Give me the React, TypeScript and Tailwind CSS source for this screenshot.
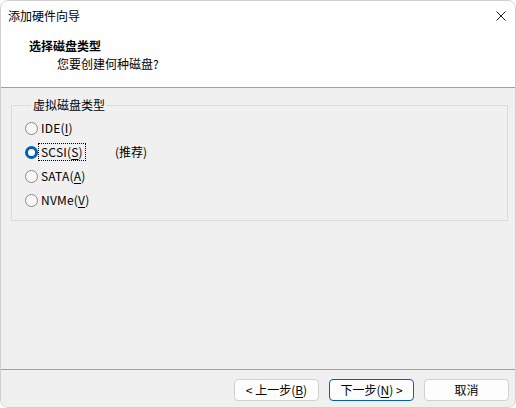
import React, { useState } from 'react';

const font = { fontFamily: '"Noto Sans CJK SC", "Noto Sans", sans-serif' };

const options = [
  { id: 'ide', name: 'IDE(', key: 'I', tail: ')' },
  { id: 'scsi', name: 'SCSI(', key: 'S', tail: ')', note: '(推荐)' },
  { id: 'sata', name: 'SATA(', key: 'A', tail: ')' },
  { id: 'nvme', name: 'NVMe(', key: 'V', tail: ')' },
];

const Radio = ({ checked }: { checked: boolean }) =>
  checked ? (
    <span className="w-[13px] h-[13px] rounded-full border-[3px] border-[#005fb8] bg-white shrink-0" />
  ) : (
    <span className="w-[13px] h-[13px] rounded-full border border-[#8a8a8a] bg-[#f7f7f7] shrink-0" />
  );

const App = () => {
  const [selected, setSelected] = useState('scsi');

  return (
    <div className="w-[516px] h-[408px] bg-white text-[12px] text-black leading-none" style={font}>
      <div className="h-full flex flex-col border border-[#cfcfcf] rounded-[8px] overflow-hidden">
        {/* Title bar */}
        <div className="h-[29px] shrink-0 bg-white flex items-center justify-between pl-[7px] pr-[8px]">
          <span className="text-[12px]">添加硬件向导</span>
          <svg width="10" height="10" viewBox="0 0 10 10" className="mr-[1px]">
            <path d="M0.5 0.5 L9.5 9.5 M9.5 0.5 L0.5 9.5" stroke="#1a1a1a" strokeWidth="1" />
          </svg>
        </div>

        {/* Header */}
        <div className="h-[58px] shrink-0 bg-white border-b border-[#a0a0a0] pl-[28px] pt-[7px]">
          <div className="h-[18px] flex items-center font-bold">选择磁盘类型</div>
          <div className="h-[18px] flex items-center pl-[28px]">您要创建何种磁盘?</div>
        </div>

        {/* Body */}
        <div className="flex-1 bg-[#f0f0f0] px-[10px] pt-[10px]">
          <fieldset className="w-[497px] border border-[#dcdcdc] pl-[13px] pb-[8px]">
            <legend className="ml-[6px] px-[2px] h-[14px] leading-[14px]">虚拟磁盘类型</legend>
            <div className="pt-[4px] flex flex-col">
              {options.map((o) => (
                <label
                  key={o.id}
                  className="h-[24px] flex items-center cursor-default"
                  onClick={() => setSelected(o.id)}
                >
                  <Radio checked={selected === o.id} />
                  <span className="w-[77px] pl-[3px] flex tracking-[0.2px]">
                    <span
                      className={
                        selected === o.id
                          ? 'outline outline-1 outline-dotted outline-black outline-offset-[2px]'
                          : ''
                      }
                    >
                      {o.name}
                      <span className="underline underline-offset-[2px]">{o.key}</span>
                      {o.tail}
                    </span>
                  </span>
                  {o.note && <span>{o.note}</span>}
                </label>
              ))}
            </div>
          </fieldset>
        </div>

        {/* Footer */}
        <div className="h-[38px] shrink-0 bg-[#f0f0f0] border-t border-[#a0a0a0] flex justify-end items-start pt-[9px] pr-[6px] gap-[10px]">
          <button className="w-[85px] h-[22px] rounded-[4px] border border-[#d0d0d0] bg-[#fdfdfd] flex items-center justify-center">
            &lt; 上一步(<span className="underline underline-offset-[2px]">B</span>)
          </button>
          <button className="w-[85px] h-[22px] rounded-[4px] border border-[#005fb8] bg-[#fdfdfd] flex items-center justify-center">
            下一步(<span className="underline underline-offset-[2px]">N</span>) &gt;
          </button>
          <button className="w-[85px] h-[22px] rounded-[4px] border border-[#d0d0d0] bg-[#fdfdfd] flex items-center justify-center">
            取消
          </button>
        </div>
      </div>
    </div>
  );
};

export default App;
